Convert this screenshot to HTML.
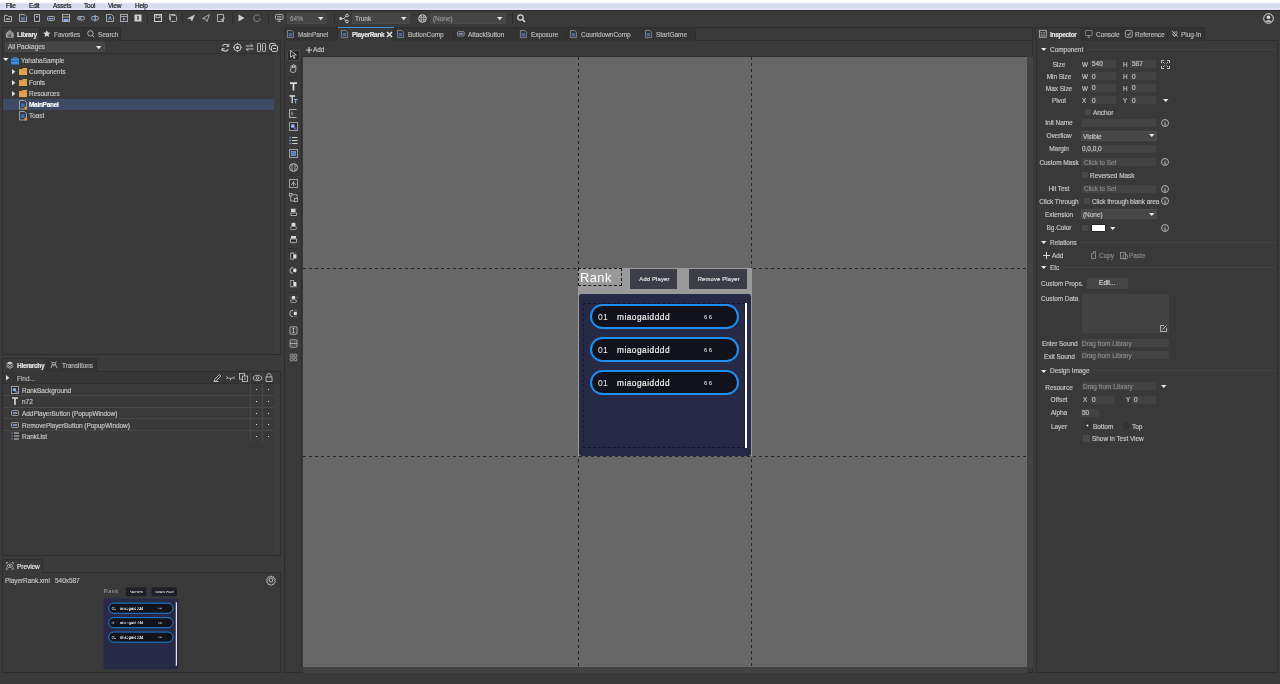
<!DOCTYPE html>
<html><head><meta charset="utf-8">
<style>
*{margin:0;padding:0;box-sizing:border-box}
html,body{-webkit-font-smoothing:antialiased;width:1280px;height:684px;overflow:hidden;background:#3a3a3a;font-family:"Liberation Sans",sans-serif;color:#cfcfcf}
.a{position:absolute}
.t{position:absolute;white-space:nowrap;will-change:transform}
svg{overflow:visible}
</style></head><body>

<div class="a" style="left:0px;top:0px;width:1280px;height:10px;background:linear-gradient(#ffffff 0px,#ffffff 1.5px,#eceef8 3px,#d8dcef 4.5px,#d8dcef 8px,#e3e7f8 9px,#e3e7f8 10px)"></div>
<div class="a" style="left:0px;top:10px;width:1280px;height:1px;background:#2a2728"></div>
<div class="t" style="left:6px;top:1.5px;font-size:6.5px;line-height:9.5px;color:#111;letter-spacing:-0.2px;-webkit-text-stroke:0.15px #111;line-height:8px;">File</div>
<div class="t" style="left:29px;top:1.5px;font-size:6.5px;line-height:9.5px;color:#111;letter-spacing:-0.2px;-webkit-text-stroke:0.15px #111;line-height:8px;">Edit</div>
<div class="t" style="left:52.5px;top:1.5px;font-size:6.5px;line-height:9.5px;color:#111;letter-spacing:-0.2px;-webkit-text-stroke:0.15px #111;line-height:8px;">Assets</div>
<div class="t" style="left:84px;top:1.5px;font-size:6.5px;line-height:9.5px;color:#111;letter-spacing:-0.2px;-webkit-text-stroke:0.15px #111;line-height:8px;">Tool</div>
<div class="t" style="left:108px;top:1.5px;font-size:6.5px;line-height:9.5px;color:#111;letter-spacing:-0.2px;-webkit-text-stroke:0.15px #111;line-height:8px;">View</div>
<div class="t" style="left:134.5px;top:1.5px;font-size:6.5px;line-height:9.5px;color:#111;letter-spacing:-0.2px;-webkit-text-stroke:0.15px #111;line-height:8px;">Help</div>
<svg class="a" style="left:4px;top:14px;" width="9" height="9" viewBox="0 0 9 9"><path d="M0.5 1.5h3l1 1h3v5h-7z" fill="none" stroke="#a9a9a9" stroke-width="1"/><path d="M2 5h4" stroke="#e0e0e0"/></svg>
<svg class="a" style="left:18.5px;top:14px;" width="9" height="9" viewBox="0 0 9 9"><path d="M0.5 0.5h5l2 2v5h-7z" fill="none" stroke="#a9a9a9"/><rect x="2" y="3" width="4" height="3.5" fill="#5a72a8"/></svg>
<svg class="a" style="left:33px;top:14px;" width="9" height="9" viewBox="0 0 9 9"><rect x="1.5" y="0.5" width="5" height="7" fill="none" stroke="#a9a9a9"/><rect x="3" y="2" width="2" height="1.5" fill="#86a8ec"/><path d="M2 5h4" stroke="#222"/></svg>
<svg class="a" style="left:47px;top:14px;" width="9" height="9" viewBox="0 0 9 9"><rect x="0.5" y="2.5" width="7" height="4" rx="1" fill="none" stroke="#a9a9a9"/><rect x="1.5" y="4" width="5" height="1.2" fill="#86a8ec"/></svg>
<svg class="a" style="left:61.5px;top:14px;" width="9" height="9" viewBox="0 0 9 9"><rect x="0.5" y="0.5" width="7" height="7" fill="none" stroke="#a9a9a9"/><rect x="1.5" y="5" width="5" height="2" fill="#86a8ec"/><path d="M1 3h6" stroke="#a9a9a9"/></svg>
<svg class="a" style="left:76.5px;top:14px;" width="9" height="9" viewBox="0 0 9 9"><rect x="0.5" y="2.5" width="7" height="3.5" rx="1.5" fill="none" stroke="#a9a9a9"/><rect x="1.5" y="3.5" width="3" height="1.5" fill="#86a8ec"/></svg>
<svg class="a" style="left:91px;top:14px;" width="9" height="9" viewBox="0 0 9 9"><rect x="0.5" y="2.5" width="7" height="3.5" rx="1.5" fill="none" stroke="#a9a9a9"/><rect x="3.5" y="1" width="1.3" height="6.5" fill="#86a8ec"/></svg>
<svg class="a" style="left:105.5px;top:14px;" width="9" height="9" viewBox="0 0 9 9"><path d="M0.5 0.5h5l2 2v5h-7z" fill="none" stroke="#a9a9a9"/><path d="M2.5 6l1.5-3.5 1.5 3.5" stroke="#86a8ec" fill="none"/></svg>
<svg class="a" style="left:119.5px;top:14px;" width="9" height="9" viewBox="0 0 9 9"><rect x="0.5" y="0.5" width="7" height="7" fill="none" stroke="#a9a9a9"/><path d="M0.5 2.5h7" stroke="#a9a9a9"/><path d="M3 3.5v3l2.5-1.5z" fill="#86a8ec"/></svg>
<svg class="a" style="left:134px;top:14px;" width="9" height="9" viewBox="0 0 9 9"><rect x="0.5" y="0.5" width="7" height="7" fill="#cfcfcf"/><path d="M4 2v4" stroke="#222" stroke-width="1.2"/></svg>
<svg class="a" style="left:153.5px;top:14px;" width="9" height="9" viewBox="0 0 9 9"><rect x="0.5" y="0.5" width="7" height="7" fill="none" stroke="#cfcfcf"/><rect x="2" y="1" width="4" height="2.5" fill="none" stroke="#cfcfcf" stroke-width=".8"/></svg>
<svg class="a" style="left:168.5px;top:14px;" width="9" height="9" viewBox="0 0 9 9"><rect x="1.5" y="1.5" width="6" height="6" rx="1" fill="none" stroke="#a9a9a9"/><path d="M0.5 6V0.5h6" fill="none" stroke="#a9a9a9"/></svg>
<svg class="a" style="left:187px;top:14px;" width="9" height="9" viewBox="0 0 9 9"><path d="M0 4.5L8 0.5 5 7.5 3.5 5z" fill="#c8c8c8"/></svg>
<svg class="a" style="left:202px;top:14px;" width="9" height="9" viewBox="0 0 9 9"><path d="M0.5 4.5L7.5 0.5 5 7.5 3.5 5z" fill="none" stroke="#a9a9a9"/></svg>
<svg class="a" style="left:217px;top:14px;" width="9" height="9" viewBox="0 0 9 9"><rect x="0.5" y="0.5" width="6" height="7" fill="none" stroke="#a9a9a9"/><path d="M3 6l5-3-1.5 4z" fill="#a9a9a9"/></svg>
<svg class="a" style="left:237px;top:14px;" width="9" height="9" viewBox="0 0 9 9"><path d="M1.5 0.5v7l6-3.5z" fill="#d0d0d0"/></svg>
<svg class="a" style="left:253px;top:14px;" width="9" height="9" viewBox="0 0 9 9"><path d="M6.5 2A3.3 3.3 0 1 0 7.3 4.5" fill="none" stroke="#8a8a8a"/></svg>
<svg class="a" style="left:274.5px;top:14px;" width="9" height="9" viewBox="0 0 9 9"><rect x="0.5" y="0.5" width="7.5" height="5" rx="1" fill="none" stroke="#a9a9a9"/><path d="M4.25 5.5v2M2.5 7.5h3.5M2 2.5h4.5M2 4h4.5" stroke="#a9a9a9" stroke-width=".8"/></svg>
<div class="a" style="left:147px;top:13px;width:1px;height:11px;background:#2c2c2c"></div>
<div class="a" style="left:182px;top:13px;width:1px;height:11px;background:#2c2c2c"></div>
<div class="a" style="left:232px;top:13px;width:1px;height:11px;background:#2c2c2c"></div>
<div class="a" style="left:267.5px;top:13px;width:1px;height:11px;background:#2c2c2c"></div>
<div class="a" style="left:334px;top:13px;width:1px;height:11px;background:#2c2c2c"></div>
<div class="a" style="left:512px;top:13px;width:1px;height:11px;background:#2c2c2c"></div>
<div class="a" style="left:287px;top:13px;width:40px;height:11px;background:#454545;border:1px solid #4a4a4a;border-radius:1px"></div>
<div class="t" style="left:290px;top:13.899999999999999px;font-size:6.5px;line-height:9.5px;color:#9a9a9a;letter-spacing:-0.05px;-webkit-text-stroke:0.15px #9a9a9a;">64%</div>
<svg class="a" style="left:318px;top:17.0px;" width="6" height="4" viewBox="0 0 6 4"><path d="M0 0h5.5l-2.75 3.2z" fill="#e6e6e6"/></svg>
<svg class="a" style="left:339px;top:14px;" width="10" height="9" viewBox="0 0 10 9"><circle cx="1.8" cy="4.5" r="1.5" fill="#d0d0d0"/><circle cx="8" cy="1.5" r="1.3" fill="none" stroke="#d0d0d0"/><circle cx="8" cy="7.5" r="1.3" fill="none" stroke="#d0d0d0"/><path d="M3 4.5h2M5 4.5L7 2M5 4.5L7 7" stroke="#d0d0d0" fill="none" stroke-width=".8"/></svg>
<div class="a" style="left:352px;top:13px;width:58px;height:11px;background:#454545;border:1px solid #4a4a4a;border-radius:1px"></div>
<div class="t" style="left:355px;top:13.899999999999999px;font-size:6.5px;line-height:9.5px;color:#bdbdbd;letter-spacing:-0.05px;-webkit-text-stroke:0.15px #bdbdbd;">Trunk</div>
<svg class="a" style="left:401px;top:17.0px;" width="6" height="4" viewBox="0 0 6 4"><path d="M0 0h5.5l-2.75 3.2z" fill="#e6e6e6"/></svg>
<svg class="a" style="left:418px;top:14px;" width="9" height="9" viewBox="0 0 9 9"><circle cx="4.5" cy="4.5" r="3.8" fill="none" stroke="#d0d0d0"/><path d="M0.7 3.2h7.6M0.7 5.8h7.6M3.2 0.7v7.6M5.8 0.7v7.6" stroke="#d0d0d0" stroke-width=".7"/></svg>
<div class="a" style="left:430px;top:13px;width:76px;height:11px;background:#454545;border:1px solid #4a4a4a;border-radius:1px"></div>
<div class="t" style="left:433px;top:13.899999999999999px;font-size:6.5px;line-height:9.5px;color:#9a9a9a;letter-spacing:-0.05px;-webkit-text-stroke:0.15px #9a9a9a;">(None)</div>
<svg class="a" style="left:497px;top:17.0px;" width="6" height="4" viewBox="0 0 6 4"><path d="M0 0h5.5l-2.75 3.2z" fill="#e6e6e6"/></svg>
<svg class="a" style="left:517px;top:14px;" width="9" height="9" viewBox="0 0 9 9"><circle cx="3.5" cy="3.5" r="2.7" fill="none" stroke="#e0e0e0" stroke-width="1.2"/><path d="M5.5 5.5L8 8" stroke="#e0e0e0" stroke-width="1.5"/></svg>
<svg class="a" style="left:1263px;top:13px;" width="11" height="11" viewBox="0 0 11 11"><circle cx="5.5" cy="5.5" r="4.8" fill="none" stroke="#e0e0e0" stroke-width="1"/><circle cx="5.5" cy="4.3" r="1.8" fill="#e0e0e0"/><path d="M2.3 8.8c1-2 5.4-2 6.4 0" fill="#e0e0e0"/></svg>
<div class="a" style="left:2px;top:40px;width:279px;height:315px;background:#393939;border:1px solid #2d2d2d"></div>
<div class="a" style="left:2px;top:27px;width:38px;height:14px;background:#393939;border-right:1px solid #2e2e2e;border-top:1px solid #2e2e2e;border-left:1px solid #2e2e2e;"></div>
<svg class="a" style="left:5.8px;top:30.2px;transform:scale(.85);transform-origin:0 0" width="9" height="9" viewBox="0 0 9 9"><path d="M0.5 4L4.5 0.5 8.5 4v4.5h-8z" fill="#8c8c8c" stroke="#cfcfcf" stroke-width=".8"/><rect x="3" y="5" width="3" height="3.5" fill="#5a5a5a"/></svg>
<div class="t" style="left:17px;top:29.7px;font-size:6.5px;line-height:9.5px;color:#e8e8e8;letter-spacing:-0.3px;font-weight:bold;-webkit-text-stroke:0.15px #e8e8e8;">Library</div>
<div class="a" style="left:40px;top:27px;width:44px;height:14px;background:#333333;border-right:1px solid #2e2e2e;border-top:1px solid #2e2e2e;"></div>
<svg class="a" style="left:42.8px;top:30.2px;transform:scale(.85);transform-origin:0 0" width="9" height="9" viewBox="0 0 9 9"><path d="M4.5 0.2l1.3 2.8 3 .3-2.3 2 .7 3-2.7-1.6-2.7 1.6.7-3-2.3-2 3-.3z" fill="#d8d8d8"/></svg>
<div class="t" style="left:54px;top:29.7px;font-size:6.5px;line-height:9.5px;color:#bdbdbd;letter-spacing:-0.05px;-webkit-text-stroke:0.15px #bdbdbd;">Favorties</div>
<div class="a" style="left:84px;top:27px;width:37px;height:14px;background:#333333;border-right:1px solid #2e2e2e;border-top:1px solid #2e2e2e;"></div>
<svg class="a" style="left:86.8px;top:30.2px;transform:scale(.85);transform-origin:0 0" width="9" height="9" viewBox="0 0 9 9"><circle cx="4" cy="4" r="3.2" fill="none" stroke="#cfcfcf" stroke-width=".9"/><path d="M6.3 6.3L8.5 8.5" stroke="#cfcfcf" stroke-width="1"/></svg>
<div class="t" style="left:98px;top:29.7px;font-size:6.5px;line-height:9.5px;color:#bdbdbd;letter-spacing:-0.05px;-webkit-text-stroke:0.15px #bdbdbd;">Search</div>
<div class="a" style="left:5px;top:42px;width:100px;height:10px;background:#454545;border:1px solid #4a4a4a;border-radius:1px"></div>
<div class="t" style="left:8px;top:42.400000000000006px;font-size:6.5px;line-height:9.5px;color:#c8c8c8;letter-spacing:-0.05px;-webkit-text-stroke:0.15px #c8c8c8;">All Packages</div>
<svg class="a" style="left:96px;top:45.5px;" width="6" height="4" viewBox="0 0 6 4"><path d="M0 0h5.5l-2.75 3.2z" fill="#e6e6e6"/></svg>
<svg class="a" style="left:221px;top:43px;" width="9" height="9" viewBox="0 0 9 9"><path d="M7.5 3A3.5 3.5 0 0 0 1.3 3.3M1 6a3.5 3.5 0 0 0 6.3 .2" fill="none" stroke="#cfcfcf" stroke-width="1.1"/><path d="M7.8 0.8v2.6H5.2M1 8.2V5.6h2.6" fill="none" stroke="#cfcfcf" stroke-width=".9"/></svg>
<svg class="a" style="left:233px;top:43px;" width="9" height="9" viewBox="0 0 9 9"><circle cx="4.5" cy="4.5" r="3.5" fill="none" stroke="#cfcfcf" stroke-width=".9"/><circle cx="4.5" cy="4.5" r="1.5" fill="#cfcfcf"/><path d="M4.5 0v1.5M4.5 7.5V9M0 4.5h1.5M7.5 4.5H9" stroke="#cfcfcf" stroke-width=".8"/></svg>
<svg class="a" style="left:245px;top:43px;" width="9" height="9" viewBox="0 0 9 9"><path d="M0.5 3h7.5M5.5 1l2.5 2M8.5 6H1M3.5 8L1 6" fill="none" stroke="#cfcfcf" stroke-width=".9"/></svg>
<svg class="a" style="left:257px;top:43px;" width="9" height="9" viewBox="0 0 9 9"><rect x="0.5" y="0.5" width="3" height="8" rx=".8" fill="none" stroke="#cfcfcf" stroke-width=".9"/><rect x="5.5" y="0.5" width="3" height="8" rx=".8" fill="none" stroke="#cfcfcf" stroke-width=".9"/></svg>
<svg class="a" style="left:269px;top:43px;" width="9" height="9" viewBox="0 0 9 9"><rect x="0.5" y="0.5" width="6" height="6" rx="1.5" fill="none" stroke="#cfcfcf" stroke-width=".9"/><rect x="2.5" y="2.5" width="6" height="6" rx="1.5" fill="#393939" stroke="#cfcfcf" stroke-width=".9"/><path d="M4 5.5h3" stroke="#cfcfcf"/></svg>
<div class="a" style="left:3px;top:53px;width:271px;height:301px;background:#393939;border-top:1px solid #2f2f2f"></div>
<div class="a" style="left:274px;top:54px;width:6px;height:300px;background:#3d3d3d"></div>
<div class="a" style="left:3px;top:99px;width:271px;height:11px;background:#3c4a66"></div>
<svg class="a" style="left:3.3px;top:58px;" width="6" height="4" viewBox="0 0 6 4"><path d="M0 0h5.5l-2.75 3z" fill="#e8e8e8"/></svg>
<svg class="a" style="left:11px;top:56.5px;" width="8" height="8" viewBox="0 0 8 8"><path d="M2.5 1.5v-1h3v1" fill="none" stroke="#3d8fe0" stroke-width=".9"/><rect x="0" y="1.5" width="8" height="6" fill="#3d8fe0"/><path d="M0 4h8" stroke="#1f4f7f" stroke-width=".7"/></svg>
<div class="t" style="left:21px;top:55.7px;font-size:6.5px;line-height:9.5px;color:#c8c8c8;letter-spacing:-0.05px;-webkit-text-stroke:0.15px #c8c8c8;">YahahaSample</div>
<svg class="a" style="left:12px;top:68.5px;" width="4" height="6" viewBox="0 0 4 6"><path d="M0 0v5.5l3.3-2.75z" fill="#e0e0e0"/></svg>
<svg class="a" style="left:19px;top:67.5px;" width="8" height="7" viewBox="0 0 8 7"><path d="M0 1h3l1 -1h4v7H0z" fill="#e3a24f"/><path d="M0 2h8" stroke="#c98a3b" stroke-width=".6"/></svg>
<div class="t" style="left:28.5px;top:66.7px;font-size:6.5px;line-height:9.5px;color:#c8c8c8;letter-spacing:-0.05px;-webkit-text-stroke:0.15px #c8c8c8;">Components</div>
<svg class="a" style="left:12px;top:79.5px;" width="4" height="6" viewBox="0 0 4 6"><path d="M0 0v5.5l3.3-2.75z" fill="#e0e0e0"/></svg>
<svg class="a" style="left:19px;top:78.5px;" width="8" height="7" viewBox="0 0 8 7"><path d="M0 1h3l1 -1h4v7H0z" fill="#e3a24f"/><path d="M0 2h8" stroke="#c98a3b" stroke-width=".6"/></svg>
<div class="t" style="left:28.5px;top:77.7px;font-size:6.5px;line-height:9.5px;color:#c8c8c8;letter-spacing:-0.05px;-webkit-text-stroke:0.15px #c8c8c8;">Fonts</div>
<svg class="a" style="left:12px;top:90.5px;" width="4" height="6" viewBox="0 0 4 6"><path d="M0 0v5.5l3.3-2.75z" fill="#e0e0e0"/></svg>
<svg class="a" style="left:19px;top:89.5px;" width="8" height="7" viewBox="0 0 8 7"><path d="M0 1h3l1 -1h4v7H0z" fill="#e3a24f"/><path d="M0 2h8" stroke="#c98a3b" stroke-width=".6"/></svg>
<div class="t" style="left:28.5px;top:88.7px;font-size:6.5px;line-height:9.5px;color:#c8c8c8;letter-spacing:-0.05px;-webkit-text-stroke:0.15px #c8c8c8;">Resources</div>
<svg class="a" style="left:19px;top:99.5px;" width="9" height="10" viewBox="0 0 9 10"><path d="M0.5 0.5h5l2 2v6.5h-7z" fill="#34405a" stroke="#a8a8a8" stroke-width=".9"/><rect x="2" y="3.5" width="3.5" height="3.5" fill="#4a68a8"/><circle cx="6.8" cy="8" r="1.5" fill="#f08a2a"/></svg>
<div class="t" style="left:28.5px;top:99.7px;font-size:6.5px;line-height:9.5px;color:#ffffff;letter-spacing:-0.3px;font-weight:bold;-webkit-text-stroke:0.15px #ffffff;">MainPanel</div>
<svg class="a" style="left:19px;top:110.5px;" width="9" height="10" viewBox="0 0 9 10"><path d="M0.5 0.5h5l2 2v6.5h-7z" fill="#34405a" stroke="#a8a8a8" stroke-width=".9"/><rect x="2" y="3.5" width="3.5" height="3.5" fill="#4a68a8"/><circle cx="6.8" cy="8" r="1.5" fill="#f08a2a"/></svg>
<div class="t" style="left:28.5px;top:110.7px;font-size:6.5px;line-height:9.5px;color:#c8c8c8;letter-spacing:-0.05px;-webkit-text-stroke:0.15px #c8c8c8;">Toast</div>
<div class="a" style="left:2px;top:371px;width:279px;height:185px;background:#393939;border:1px solid #2d2d2d"></div>
<div class="a" style="left:2px;top:358px;width:45px;height:14px;background:#393939;border-right:1px solid #2e2e2e;border-top:1px solid #2e2e2e;border-left:1px solid #2e2e2e;"></div>
<svg class="a" style="left:5.8px;top:361.2px;transform:scale(.85);transform-origin:0 0" width="9" height="9" viewBox="0 0 9 9"><path d="M4.5 0.5L8.5 2.5 4.5 4.5 0.5 2.5z" fill="#d0d0d0"/><path d="M0.5 4.5l4 2 4-2M0.5 6.5l4 2 4-2" fill="none" stroke="#d0d0d0" stroke-width=".9"/></svg>
<div class="t" style="left:17px;top:360.7px;font-size:6.5px;line-height:9.5px;color:#e8e8e8;letter-spacing:-0.3px;font-weight:bold;-webkit-text-stroke:0.15px #e8e8e8;">Hierarchy</div>
<div class="a" style="left:47px;top:358px;width:50px;height:14px;background:#333333;border-right:1px solid #2e2e2e;border-top:1px solid #2e2e2e;"></div>
<svg class="a" style="left:49.8px;top:361.2px;transform:scale(.85);transform-origin:0 0" width="9" height="9" viewBox="0 0 9 9"><path d="M1.5 0.5v1M7.5 0.5v1M2.5 2h4v2.5h-4z" fill="none" stroke="#cfcfcf" stroke-width=".9"/><path d="M2.5 4.5L1 8.5M6.5 4.5l2 4M4.5 4.5v2" fill="none" stroke="#cfcfcf" stroke-width=".9"/></svg>
<div class="t" style="left:62px;top:360.7px;font-size:6.5px;line-height:9.5px;color:#bdbdbd;letter-spacing:-0.05px;-webkit-text-stroke:0.15px #bdbdbd;">Transitions</div>
<div class="a" style="left:3px;top:372px;width:271px;height:12px;background:#363636;border-bottom:1px solid #2f2f2f"></div>
<div class="a" style="left:13px;top:372px;width:1px;height:12px;background:#2f2f2f"></div>
<svg class="a" style="left:6px;top:375px;" width="4" height="6" viewBox="0 0 4 6"><path d="M0 0v5.5l3.3-2.75z" fill="#e0e0e0"/></svg>
<div class="t" style="left:16.5px;top:373.7px;font-size:6.5px;line-height:9.5px;color:#b8b8b8;letter-spacing:-0.05px;-webkit-text-stroke:0.15px #b8b8b8;">Find...</div>
<svg class="a" style="left:213px;top:373px;" width="9" height="9" viewBox="0 0 9 9"><path d="M1.5 6.5L6.5 1.5l1.5 1.5-5 5H1.5z" fill="none" stroke="#cfcfcf" stroke-width=".8"/><path d="M0.5 8.5h5" stroke="#cfcfcf" stroke-width=".8"/></svg>
<svg class="a" style="left:226px;top:374px;" width="9" height="8" viewBox="0 0 9 8"><path d="M0.5 2.5c2 2.5 6 2.5 8 0" fill="none" stroke="#cfcfcf" stroke-width=".9"/><path d="M1.5 3.5L0.5 5M4.5 4.8v1.5M7.5 3.5l1 1.5" stroke="#cfcfcf" stroke-width=".8"/></svg>
<svg class="a" style="left:238.5px;top:373px;" width="9" height="9" viewBox="0 0 9 9"><rect x="0.5" y="0.5" width="5" height="5.5" fill="none" stroke="#cfcfcf" stroke-width=".8"/><rect x="3.5" y="3" width="5" height="5.5" fill="#363636" stroke="#cfcfcf" stroke-width=".8"/><path d="M6 4.5v2.5" stroke="#cfcfcf" stroke-width=".8"/></svg>
<div class="a" style="left:250px;top:372px;width:1px;height:70px;background:#474747"></div>
<div class="a" style="left:262px;top:372px;width:1px;height:70px;background:#474747"></div>
<svg class="a" style="left:252.5px;top:374px;" width="9" height="8" viewBox="0 0 9 8"><ellipse cx="4.5" cy="4" rx="4.2" ry="2.6" fill="none" stroke="#cfcfcf" stroke-width=".8"/><circle cx="4.5" cy="4" r="1.3" fill="none" stroke="#cfcfcf" stroke-width=".8"/></svg>
<svg class="a" style="left:265px;top:373px;" width="8" height="9" viewBox="0 0 8 9"><path d="M2 4V2.5a2 2 0 0 1 4 0V4" fill="none" stroke="#cfcfcf" stroke-width=".8"/><rect x="1" y="4" width="6" height="4.5" fill="none" stroke="#cfcfcf" stroke-width=".8"/></svg>
<div class="a" style="left:274px;top:384px;width:6px;height:171px;background:#3d3d3d"></div>
<div class="a" style="left:3px;top:395.2px;width:271px;height:1px;background:#474747"></div>
<svg class="a" style="left:11px;top:385.8px;" width="8" height="8" viewBox="0 0 8 8"><rect x="0.5" y="0.5" width="7" height="7" fill="#2b2b2b" stroke="#a8a8a8" stroke-width=".9"/><circle cx="3.5" cy="3.8" r="1.8" fill="#8fb0ef"/><rect x="4.5" y="5" width="2.5" height="2" fill="#4f6fb0"/></svg>
<div class="t" style="left:21.5px;top:385.7px;font-size:6.5px;line-height:9.5px;color:#c8c8c8;letter-spacing:-0.05px;-webkit-text-stroke:0.15px #c8c8c8;">RankBackground</div>
<div class="a" style="left:256px;top:389.3px;width:1.2px;height:1.2px;background:#dcdcdc"></div>
<div class="a" style="left:268px;top:389.3px;width:1.2px;height:1.2px;background:#dcdcdc"></div>
<div class="a" style="left:3px;top:406.8px;width:271px;height:1px;background:#474747"></div>
<svg class="a" style="left:11px;top:397.40000000000003px;" width="8" height="8" viewBox="0 0 8 8"><path d="M1 1h6M4 1v7" stroke="#d8d8d8" stroke-width="1.6"/></svg>
<div class="t" style="left:21.5px;top:397.3px;font-size:6.5px;line-height:9.5px;color:#c8c8c8;letter-spacing:-0.05px;-webkit-text-stroke:0.15px #c8c8c8;">n72</div>
<div class="a" style="left:256px;top:400.90000000000003px;width:1.2px;height:1.2px;background:#dcdcdc"></div>
<div class="a" style="left:268px;top:400.90000000000003px;width:1.2px;height:1.2px;background:#dcdcdc"></div>
<div class="a" style="left:3px;top:418.4px;width:271px;height:1px;background:#474747"></div>
<svg class="a" style="left:11px;top:410.0px;" width="8" height="6" viewBox="0 0 8 6"><rect x="0.5" y="0.5" width="7" height="5" rx="1" fill="none" stroke="#a8a8a8" stroke-width=".9"/><rect x="1.8" y="2.4" width="4.4" height="1.3" fill="#9ab8f5"/></svg>
<div class="t" style="left:21.5px;top:408.9px;font-size:6.5px;line-height:9.5px;color:#c8c8c8;letter-spacing:-0.05px;-webkit-text-stroke:0.15px #c8c8c8;">AddPlayerButton (PopupWindow)</div>
<div class="a" style="left:256px;top:412.5px;width:1.2px;height:1.2px;background:#dcdcdc"></div>
<div class="a" style="left:268px;top:412.5px;width:1.2px;height:1.2px;background:#dcdcdc"></div>
<div class="a" style="left:3px;top:430.0px;width:271px;height:1px;background:#474747"></div>
<svg class="a" style="left:11px;top:421.6px;" width="8" height="6" viewBox="0 0 8 6"><rect x="0.5" y="0.5" width="7" height="5" rx="1" fill="none" stroke="#a8a8a8" stroke-width=".9"/><rect x="1.8" y="2.4" width="4.4" height="1.3" fill="#9ab8f5"/></svg>
<div class="t" style="left:21.5px;top:420.5px;font-size:6.5px;line-height:9.5px;color:#c8c8c8;letter-spacing:-0.05px;-webkit-text-stroke:0.15px #c8c8c8;">RemovePlayerButton (PopupWindow)</div>
<div class="a" style="left:256px;top:424.1px;width:1.2px;height:1.2px;background:#dcdcdc"></div>
<div class="a" style="left:268px;top:424.1px;width:1.2px;height:1.2px;background:#dcdcdc"></div>
<svg class="a" style="left:11px;top:432.2px;" width="8" height="8" viewBox="0 0 8 8"><path d="M0.5 1h1M0.5 4h1M0.5 7h1" stroke="#8fb0ef" stroke-width="1.2"/><path d="M3 1h5M3 4h5M3 7h5" stroke="#d0d0d0" stroke-width="1"/></svg>
<div class="t" style="left:21.5px;top:432.09999999999997px;font-size:6.5px;line-height:9.5px;color:#c8c8c8;letter-spacing:-0.05px;-webkit-text-stroke:0.15px #c8c8c8;">RankList</div>
<div class="a" style="left:256px;top:435.7px;width:1.2px;height:1.2px;background:#dcdcdc"></div>
<div class="a" style="left:268px;top:435.7px;width:1.2px;height:1.2px;background:#dcdcdc"></div>
<div class="a" style="left:2px;top:572px;width:279px;height:101px;background:#393939;border:1px solid #2d2d2d"></div>
<div class="a" style="left:2px;top:559px;width:41px;height:14px;background:#393939;border-right:1px solid #2e2e2e;border-top:1px solid #2e2e2e;border-left:1px solid #2e2e2e;"></div>
<svg class="a" style="left:5.8px;top:562.2px;transform:scale(.85);transform-origin:0 0" width="9" height="9" viewBox="0 0 9 9"><path d="M0.5 2.5v-2h2M6.5 0.5h2v2M8.5 6.5v2h-2M2.5 8.5h-2v-2" fill="none" stroke="#cfcfcf" stroke-width=".8"/><ellipse cx="4.5" cy="4.5" rx="3.2" ry="2" fill="none" stroke="#cfcfcf" stroke-width=".8"/><circle cx="4.5" cy="4.5" r="1" fill="#cfcfcf"/></svg>
<div class="t" style="left:17px;top:561.7px;font-size:6.5px;line-height:9.5px;color:#e8e8e8;letter-spacing:-0.05px;-webkit-text-stroke:0.15px #e8e8e8;">Preview</div>
<div class="t" style="left:5px;top:576.2px;font-size:6.5px;line-height:9.5px;color:#c8c8c8;letter-spacing:-0.05px;-webkit-text-stroke:0.15px #c8c8c8;">PlayerRank.xml</div>
<div class="t" style="left:54.5px;top:576.2px;font-size:6.5px;line-height:9.5px;color:#c8c8c8;letter-spacing:-0.05px;-webkit-text-stroke:0.15px #c8c8c8;">540x587</div>
<svg class="a" style="left:266px;top:575px;" width="10" height="10" viewBox="0 0 10 10"><circle cx="5" cy="5" r="2" fill="none" stroke="#cfcfcf" stroke-width=".9"/><path d="M5 0.8l1 1.3 1.6-.3.4 1.6 1.4.8-.7 1.5.7 1.5-1.4.8-.4 1.6-1.6-.3-1 1.3-1-1.3-1.6.3-.4-1.6-1.4-.8.7-1.5-.7-1.5 1.4-.8.4-1.6 1.6.3z" fill="none" stroke="#cfcfcf" stroke-width=".8"/></svg>
<div class="a" style="left:284px;top:27px;width:749px;height:646px;background:#393939;border:1px solid #2d2d2d"></div>
<div class="a" style="left:285px;top:40px;width:747px;height:1px;background:#2d2d2d"></div>
<div class="a" style="left:284px;top:27px;width:54px;height:14px;background:#333333;border-right:1px solid #2e2e2e;border-top:1px solid #2e2e2e;"></div>
<svg class="a" style="left:286.8px;top:30.2px;transform:scale(.85);transform-origin:0 0" width="9" height="9" viewBox="0 0 9 9"><path d="M0.5 0.5h5l2 2v6.5h-7z" fill="#2e3440" stroke="#9a9a9a" stroke-width=".9"/><rect x="2" y="3.5" width="4" height="4" fill="#4f66a0"/></svg>
<div class="t" style="left:297.5px;top:29.7px;font-size:6.5px;line-height:9.5px;color:#bdbdbd;letter-spacing:-0.05px;-webkit-text-stroke:0.15px #bdbdbd;">MainPanel</div>
<div class="a" style="left:338px;top:27px;width:56px;height:14px;background:#393939;border-right:1px solid #2e2e2e;border-top:1px solid #2e2e2e;"></div>
<svg class="a" style="left:340.8px;top:30.2px;transform:scale(.85);transform-origin:0 0" width="9" height="9" viewBox="0 0 9 9"><path d="M0.5 0.5h5l2 2v6.5h-7z" fill="#2e3440" stroke="#9a9a9a" stroke-width=".9"/><rect x="2" y="3.5" width="4" height="4" fill="#4f66a0"/></svg>
<div class="t" style="left:351.5px;top:29.7px;font-size:6.5px;line-height:9.5px;color:#e8e8e8;letter-spacing:-0.3px;font-weight:bold;-webkit-text-stroke:0.15px #e8e8e8;">PlayerRank</div>
<div class="a" style="left:394px;top:27px;width:60px;height:14px;background:#333333;border-right:1px solid #2e2e2e;border-top:1px solid #2e2e2e;"></div>
<svg class="a" style="left:396.8px;top:30.2px;transform:scale(.85);transform-origin:0 0" width="9" height="9" viewBox="0 0 9 9"><path d="M0.5 0.5h5l2 2v6.5h-7z" fill="#2e3440" stroke="#9a9a9a" stroke-width=".9"/><rect x="2" y="3.5" width="4" height="4" fill="#4f66a0"/></svg>
<div class="t" style="left:407.5px;top:29.7px;font-size:6.5px;line-height:9.5px;color:#bdbdbd;letter-spacing:-0.05px;-webkit-text-stroke:0.15px #bdbdbd;">ButtonComp</div>
<div class="a" style="left:454px;top:27px;width:63px;height:14px;background:#333333;border-right:1px solid #2e2e2e;border-top:1px solid #2e2e2e;"></div>
<svg class="a" style="left:456.8px;top:30.2px;transform:scale(.85);transform-origin:0 0" width="9" height="9" viewBox="0 0 9 9"><rect x="0.5" y="2" width="8" height="5" rx="1" fill="none" stroke="#a8a8a8" stroke-width=".9"/><rect x="1.8" y="3.9" width="5.4" height="1.3" fill="#9ab8f5"/></svg>
<div class="t" style="left:467.5px;top:29.7px;font-size:6.5px;line-height:9.5px;color:#bdbdbd;letter-spacing:-0.05px;-webkit-text-stroke:0.15px #bdbdbd;">AttackButton</div>
<div class="a" style="left:517px;top:27px;width:50px;height:14px;background:#333333;border-right:1px solid #2e2e2e;border-top:1px solid #2e2e2e;"></div>
<svg class="a" style="left:519.8px;top:30.2px;transform:scale(.85);transform-origin:0 0" width="9" height="9" viewBox="0 0 9 9"><path d="M0.5 0.5h5l2 2v6.5h-7z" fill="#2e3440" stroke="#9a9a9a" stroke-width=".9"/><rect x="2" y="3.5" width="4" height="4" fill="#4f66a0"/></svg>
<div class="t" style="left:530.5px;top:29.7px;font-size:6.5px;line-height:9.5px;color:#bdbdbd;letter-spacing:-0.05px;-webkit-text-stroke:0.15px #bdbdbd;">Exposure</div>
<div class="a" style="left:567px;top:27px;width:75px;height:14px;background:#333333;border-right:1px solid #2e2e2e;border-top:1px solid #2e2e2e;"></div>
<svg class="a" style="left:569.8px;top:30.2px;transform:scale(.85);transform-origin:0 0" width="9" height="9" viewBox="0 0 9 9"><path d="M0.5 0.5h5l2 2v6.5h-7z" fill="#2e3440" stroke="#9a9a9a" stroke-width=".9"/><rect x="2" y="3.5" width="4" height="4" fill="#4f66a0"/></svg>
<div class="t" style="left:580.5px;top:29.7px;font-size:6.5px;line-height:9.5px;color:#bdbdbd;letter-spacing:-0.05px;-webkit-text-stroke:0.15px #bdbdbd;">CountdownComp</div>
<div class="a" style="left:642px;top:27px;width:54px;height:14px;background:#333333;border-right:1px solid #2e2e2e;border-top:1px solid #2e2e2e;"></div>
<svg class="a" style="left:644.8px;top:30.2px;transform:scale(.85);transform-origin:0 0" width="9" height="9" viewBox="0 0 9 9"><path d="M0.5 0.5h5l2 2v6.5h-7z" fill="#2e3440" stroke="#9a9a9a" stroke-width=".9"/><rect x="2" y="3.5" width="4" height="4" fill="#4f66a0"/></svg>
<div class="t" style="left:655.5px;top:29.7px;font-size:6.5px;line-height:9.5px;color:#bdbdbd;letter-spacing:-0.05px;-webkit-text-stroke:0.15px #bdbdbd;">StartGame</div>
<div class="a" style="left:338px;top:27px;width:56px;height:1.3px;background:#3d8fd6"></div>
<svg class="a" style="left:386px;top:31px;" width="7" height="7" viewBox="0 0 7 7"><path d="M1 1l5 5M6 1L1 6" stroke="#f0f0f0" stroke-width="1.3"/></svg>
<div class="a" style="left:285px;top:41px;width:747px;height:15px;background:#393939"></div>
<div class="a" style="left:303px;top:56px;width:724px;height:1px;background:#2b2b2b"></div>
<svg class="a" style="left:305.5px;top:47.3px;" width="6" height="6" viewBox="0 0 6 6"><path d="M3 0v6M0 3h6" stroke="#d8d8d8" stroke-width="1"/></svg>
<div class="t" style="left:313px;top:45.1px;font-size:6.5px;line-height:9.5px;color:#c8c8c8;letter-spacing:-0.05px;-webkit-text-stroke:0.15px #c8c8c8;">Add</div>
<div class="a" style="left:285px;top:57px;width:17px;height:609px;background:#393939;border-right:1px solid #2d2d2d"></div>
<div class="a" style="left:286.5px;top:50px;width:13px;height:11px;background:#2a2a2a;border:1px solid #4a4a4a;border-radius:1px"></div>
<svg class="a" style="left:289px;top:50.4px;" width="9" height="9" viewBox="0 0 9 9"><path d="M1.5 0.5v7l2-2 1.5 3 1-.5-1.5-3h2.8z" fill="none" stroke="#cfcfcf" stroke-width=".8"/></svg>
<svg class="a" style="left:289px;top:64.4px;" width="9" height="9" viewBox="0 0 9 9"><path d="M2 4.5V2.5a.8.8 0 0 1 1.6 0V4V1.5a.8.8 0 0 1 1.6 0V4V2a.8.8 0 0 1 1.6 0v4a2.5 2.5 0 0 1-2.5 2.5h-.5A2.5 2.5 0 0 1 1.3 6z" fill="none" stroke="#cfcfcf" stroke-width=".8"/></svg>
<div class="a" style="left:287px;top:77px;width:12px;height:1px;background:#2f2f2f"></div>
<svg class="a" style="left:289px;top:81.9px;" width="9" height="9" viewBox="0 0 9 9"><path d="M1 1.2h7M4.5 1.2V8.5" stroke="#e0e0e0" stroke-width="1.7"/></svg>
<svg class="a" style="left:289px;top:95.4px;" width="9" height="9" viewBox="0 0 9 9"><path d="M0.5 1h5.5M3.2 1v7" stroke="#e0e0e0" stroke-width="1.3"/><path d="M5 4.5h3.5M6.7 4.5v4" stroke="#8fb0ef" stroke-width="1"/></svg>
<svg class="a" style="left:289px;top:108.9px;" width="9" height="9" viewBox="0 0 9 9"><path d="M7.5 0.5H0.5v8h7" fill="none" stroke="#cfcfcf" stroke-width=".8"/><path d="M3 2.5v4" stroke="#cfcfcf" stroke-width=".8"/></svg>
<svg class="a" style="left:289px;top:122.4px;" width="9" height="9" viewBox="0 0 9 9"><rect x="0.5" y="0.5" width="8" height="8" fill="#2b2b2b" stroke="#a8a8a8" stroke-width=".9"/><circle cx="3.8" cy="4" r="2" fill="#8fb0ef"/><rect x="5" y="5.5" width="2.5" height="2" fill="#4f6fb0"/></svg>
<svg class="a" style="left:289px;top:135.9px;" width="9" height="9" viewBox="0 0 9 9"><path d="M0.5 1.5h1.2M0.5 4.5h1.2M0.5 7.5h1.2" stroke="#8fb0ef" stroke-width="1.3"/><path d="M3 1.5h5.5M3 4.5h5.5M3 7.5h5.5" stroke="#cfcfcf" stroke-width="1"/></svg>
<svg class="a" style="left:289px;top:149.4px;" width="9" height="9" viewBox="0 0 9 9"><rect x="0.5" y="0.5" width="8" height="8" fill="none" stroke="#a8a8a8" stroke-width=".9"/><rect x="2.3" y="2.3" width="4.4" height="4.4" fill="#5a7ac0" stroke="#8fb0ef" stroke-width=".5"/></svg>
<svg class="a" style="left:289px;top:162.9px;" width="9" height="9" viewBox="0 0 9 9"><ellipse cx="4.5" cy="4.5" rx="4" ry="3.8" fill="none" stroke="#cfcfcf" stroke-width=".9"/><path d="M3 1v7M6 1v7" stroke="#cfcfcf" stroke-width=".7"/></svg>
<div class="a" style="left:287px;top:175px;width:12px;height:1px;background:#2f2f2f"></div>
<svg class="a" style="left:289px;top:178.9px;" width="9" height="9" viewBox="0 0 9 9"><rect x="0.5" y="0.5" width="8" height="8" fill="none" stroke="#a8a8a8" stroke-width=".9"/><path d="M2 6l2.5-2.5L7 6M4.5 2v5" stroke="#cfcfcf" stroke-width=".7" fill="none"/></svg>
<svg class="a" style="left:289px;top:192.9px;" width="9" height="9" viewBox="0 0 9 9"><rect x="0.5" y="0.5" width="2.5" height="2.5" fill="none" stroke="#cfcfcf" stroke-width=".7"/><rect x="5.5" y="5.5" width="3" height="3" fill="none" stroke="#cfcfcf" stroke-width=".7"/><path d="M1.7 3v5h3.8M3 1.7h5v3.8" stroke="#cfcfcf" stroke-width=".7" fill="none"/></svg>
<svg class="a" style="left:289px;top:208.4px;" width="9" height="9" viewBox="0 0 9 9"><rect x="2" y="1" width="4.5" height="3" fill="#d8d8d8"/><rect x="2" y="5" width="5.5" height="2.5" fill="#222" stroke="#c8c8c8" stroke-width=".8"/><path d="M1.5 0.7h6" stroke="#888" stroke-width=".6"/></svg>
<svg class="a" style="left:289px;top:221.9px;" width="9" height="9" viewBox="0 0 9 9"><rect x="2.5" y="0.8" width="4" height="3.4" rx="1.2" fill="#d8d8d8"/><rect x="1.8" y="4.6" width="5.4" height="2.8" rx=".6" fill="#222" stroke="#c8c8c8" stroke-width=".8"/></svg>
<svg class="a" style="left:289px;top:235.4px;" width="9" height="9" viewBox="0 0 9 9"><rect x="2" y="1" width="5" height="2.6" fill="#d8d8d8"/><rect x="1.5" y="4" width="6" height="3.2" fill="#222" stroke="#c8c8c8" stroke-width=".8"/><path d="M1.5 8h6" stroke="#888" stroke-width=".6"/></svg>
<div class="a" style="left:287px;top:248px;width:12px;height:1px;background:#2f2f2f"></div>
<svg class="a" style="left:289px;top:252.4px;" width="9" height="9" viewBox="0 0 9 9"><rect x="1.8" y="1.2" width="2.6" height="6" fill="#222" stroke="#c8c8c8" stroke-width=".8"/><rect x="4.8" y="2.4" width="2.6" height="4" fill="#e0e0e0"/><path d="M1.5 0.8h6" stroke="#888" stroke-width=".6"/></svg>
<svg class="a" style="left:289px;top:265.9px;" width="9" height="9" viewBox="0 0 9 9"><path d="M4 1.5A3 3 0 0 0 4 7.5" fill="none" stroke="#c8c8c8" stroke-width=".9"/><rect x="4.2" y="2.6" width="3.2" height="3.6" rx="1" fill="#e0e0e0"/></svg>
<svg class="a" style="left:289px;top:279.4px;" width="9" height="9" viewBox="0 0 9 9"><rect x="1.8" y="1.5" width="2.6" height="6" fill="#222" stroke="#c8c8c8" stroke-width=".8"/><rect x="4.8" y="3" width="2.6" height="4.5" fill="#e0e0e0"/><path d="M1 8h7" stroke="#888" stroke-width=".6"/></svg>
<div class="a" style="left:287px;top:292px;width:12px;height:1px;background:#2f2f2f"></div>
<svg class="a" style="left:289px;top:295.4px;" width="9" height="9" viewBox="0 0 9 9"><path d="M1 1.5v2M8 1.5v2" stroke="#888" stroke-width=".6"/><rect x="2.8" y="1" width="3.4" height="3" rx="1" fill="#e0e0e0"/><rect x="1.6" y="4.8" width="5.8" height="2.6" rx="1.2" fill="#222" stroke="#c8c8c8" stroke-width=".8"/></svg>
<svg class="a" style="left:289px;top:308.9px;" width="9" height="9" viewBox="0 0 9 9"><path d="M4 1.2A3 3 0 0 0 4 7.7" fill="none" stroke="#c8c8c8" stroke-width=".9"/><rect x="4.8" y="2.8" width="3" height="3.3" fill="#e0e0e0"/><path d="M5 1.2h3M5 7.7h3" stroke="#888" stroke-width=".6"/></svg>
<div class="a" style="left:287px;top:321px;width:12px;height:1px;background:#2f2f2f"></div>
<svg class="a" style="left:289px;top:325.9px;" width="9" height="9" viewBox="0 0 9 9"><rect x="1" y="0.8" width="7" height="7.4" rx="1" fill="none" stroke="#c8c8c8" stroke-width=".8"/><path d="M4.5 2v5M3.3 3.2L4.5 2l1.2 1.2M3.3 5.8L4.5 7l1.2-1.2" fill="none" stroke="#d8d8d8" stroke-width=".7"/></svg>
<svg class="a" style="left:289px;top:339.4px;" width="9" height="9" viewBox="0 0 9 9"><rect x="1" y="0.8" width="7" height="7.4" rx="1" fill="none" stroke="#c8c8c8" stroke-width=".8"/><path d="M1 4.5h7M2.5 3h1.2M5.3 3h1.2M2.5 6h1.2M5.3 6h1.2" fill="none" stroke="#d8d8d8" stroke-width=".7"/></svg>
<svg class="a" style="left:289px;top:352.9px;" width="9" height="9" viewBox="0 0 9 9"><rect x="1.2" y="1.2" width="2.8" height="2.8" rx=".7" fill="none" stroke="#c8c8c8" stroke-width=".7"/><rect x="5" y="1.2" width="2.8" height="2.8" rx=".7" fill="none" stroke="#c8c8c8" stroke-width=".7"/><rect x="1.2" y="5" width="2.8" height="2.8" rx=".7" fill="none" stroke="#c8c8c8" stroke-width=".7"/><rect x="5" y="5" width="2.8" height="2.8" rx=".7" fill="none" stroke="#c8c8c8" stroke-width=".7"/></svg>
<div class="a" style="left:303px;top:57px;width:724px;height:610px;background:#676767"></div>
<div class="a" style="left:1027px;top:57px;width:6px;height:610px;background:#424242"></div>
<div class="a" style="left:303px;top:667px;width:724px;height:6px;background:#424242"></div>
<div class="a" style="left:303px;top:268px;width:724px;height:1px;background:repeating-linear-gradient(90deg,#262626 0 3.5px,transparent 3.5px 6px)"></div>
<div class="a" style="left:303px;top:455.5px;width:724px;height:1px;background:repeating-linear-gradient(90deg,#262626 0 3.5px,transparent 3.5px 6px)"></div>
<div class="a" style="left:578px;top:57px;width:1px;height:610px;background:repeating-linear-gradient(180deg,#262626 0 3.5px,transparent 3.5px 6px)"></div>
<div class="a" style="left:751px;top:57px;width:1px;height:610px;background:repeating-linear-gradient(180deg,#262626 0 3.5px,transparent 3.5px 6px)"></div>
<div class="a" style="left:578px;top:268px;width:174px;height:187.5px;background:#9a9a9a"></div>
<div class="a" style="left:578px;top:268px;width:173px;height:187px;transform-origin:0 0;transform:scale(1.0)">
<div class="t" style="left:1.5px;top:1px;font-size:12.8px;line-height:17px;color:#ffffff;letter-spacing:0.5px">Rank</div>
<div class="a" style="left:0;top:0;width:44px;height:18px;border:1px dashed #1a1a1a"></div>
<div class="a" style="left:52px;top:1px;width:47px;height:19.6px;background:#3b3e47"></div>
<div class="a" style="left:111px;top:1px;width:57.6px;height:19.6px;background:#3b3e47"></div>
<div class="t" style="left:52.5px;top:7px;width:47px;text-align:center;font-size:5.8px;line-height:8px;color:#e8e8e8;letter-spacing:0.2px;-webkit-text-stroke:0.15px #e8e8e8">Add Player</div>
<div class="t" style="left:111.5px;top:7px;width:57.6px;text-align:center;font-size:5.8px;line-height:8px;color:#e8e8e8;letter-spacing:0.2px;-webkit-text-stroke:0.15px #e8e8e8">Remove Player</div>
<div class="a" style="left:0.7px;top:26px;width:172.3px;height:161.5px;background:#262a47;border-radius:2.5px"></div>
<div class="a" style="left:4.5px;top:34.5px;width:162px;height:145px;border:1px dashed #16172a;border-right:none"></div>
<div class="a" style="left:12px;top:36px;width:149px;height:25.2px;background:#11121c;border:2px solid #1e8ff0;border-radius:13px"></div>
<div class="t" style="left:19.5px;top:44px;font-size:8.5px;line-height:11px;color:#f0f0f0;letter-spacing:0.3px">01</div>
<div class="t" style="left:38.8px;top:44px;font-size:8.3px;line-height:11px;color:#f0f0f0;letter-spacing:0.5px;-webkit-text-stroke:0.2px #f0f0f0">miaogaidddd</div>
<div class="t" style="left:125.5px;top:44px;font-size:6px;line-height:10px;color:#f0f0f0;letter-spacing:1.4px">66</div>
<div class="a" style="left:12px;top:69px;width:149px;height:25.2px;background:#11121c;border:2px solid #1e8ff0;border-radius:13px"></div>
<div class="t" style="left:19.5px;top:77px;font-size:8.5px;line-height:11px;color:#f0f0f0;letter-spacing:0.3px">01</div>
<div class="t" style="left:38.8px;top:77px;font-size:8.3px;line-height:11px;color:#f0f0f0;letter-spacing:0.5px;-webkit-text-stroke:0.2px #f0f0f0">miaogaidddd</div>
<div class="t" style="left:125.5px;top:77px;font-size:6px;line-height:10px;color:#f0f0f0;letter-spacing:1.4px">66</div>
<div class="a" style="left:12px;top:102px;width:149px;height:25.2px;background:#11121c;border:2px solid #1e8ff0;border-radius:13px"></div>
<div class="t" style="left:19.5px;top:110px;font-size:8.5px;line-height:11px;color:#f0f0f0;letter-spacing:0.3px">01</div>
<div class="t" style="left:38.8px;top:110px;font-size:8.3px;line-height:11px;color:#f0f0f0;letter-spacing:0.5px;-webkit-text-stroke:0.2px #f0f0f0">miaogaidddd</div>
<div class="t" style="left:125.5px;top:110px;font-size:6px;line-height:10px;color:#f0f0f0;letter-spacing:1.4px">66</div>
<div class="a" style="left:166px;top:35px;width:3.2px;height:144.7px;background:#ffffff;border-left:0.5px solid #222"></div>
</div>
<div class="a" style="left:103.2px;top:587.3px;width:173px;height:187px;transform-origin:0 0;transform:scale(0.4376)">
<div class="t" style="left:1.5px;top:1px;font-size:12.8px;line-height:17px;color:#8a8a8a;letter-spacing:0.5px;font-weight:bold">Rank</div>
<div class="a" style="left:52px;top:1px;width:47px;height:19.6px;background:#1e1f27"></div>
<div class="a" style="left:111px;top:1px;width:57.6px;height:19.6px;background:#1e1f27"></div>
<div class="t" style="left:52.5px;top:7px;width:47px;text-align:center;font-size:5.8px;line-height:8px;color:#e8e8e8;letter-spacing:0.2px;-webkit-text-stroke:0.15px #e8e8e8">Add Player</div>
<div class="t" style="left:111.5px;top:7px;width:57.6px;text-align:center;font-size:5.8px;line-height:8px;color:#e8e8e8;letter-spacing:0.2px;-webkit-text-stroke:0.15px #e8e8e8">Remove Player</div>
<div class="a" style="left:0.7px;top:26px;width:172.3px;height:161.5px;background:#262a47;border-radius:2.5px"></div>
<div class="a" style="left:12px;top:36px;width:149px;height:25.2px;background:#11121c;border:2px solid #1e8ff0;border-radius:13px"></div>
<div class="t" style="left:19.5px;top:44px;font-size:8.5px;line-height:11px;color:#f0f0f0;letter-spacing:0.3px">01</div>
<div class="t" style="left:38.8px;top:44px;font-size:8.3px;line-height:11px;color:#f0f0f0;letter-spacing:0.5px;-webkit-text-stroke:0.2px #f0f0f0">miaogaidddd</div>
<div class="t" style="left:125.5px;top:44px;font-size:6px;line-height:10px;color:#f0f0f0;letter-spacing:1.4px">66</div>
<div class="a" style="left:12px;top:69px;width:149px;height:25.2px;background:#11121c;border:2px solid #1e8ff0;border-radius:13px"></div>
<div class="t" style="left:19.5px;top:77px;font-size:8.5px;line-height:11px;color:#f0f0f0;letter-spacing:0.3px">01</div>
<div class="t" style="left:38.8px;top:77px;font-size:8.3px;line-height:11px;color:#f0f0f0;letter-spacing:0.5px;-webkit-text-stroke:0.2px #f0f0f0">miaogaidddd</div>
<div class="t" style="left:125.5px;top:77px;font-size:6px;line-height:10px;color:#f0f0f0;letter-spacing:1.4px">66</div>
<div class="a" style="left:12px;top:102px;width:149px;height:25.2px;background:#11121c;border:2px solid #1e8ff0;border-radius:13px"></div>
<div class="t" style="left:19.5px;top:110px;font-size:8.5px;line-height:11px;color:#f0f0f0;letter-spacing:0.3px">01</div>
<div class="t" style="left:38.8px;top:110px;font-size:8.3px;line-height:11px;color:#f0f0f0;letter-spacing:0.5px;-webkit-text-stroke:0.2px #f0f0f0">miaogaidddd</div>
<div class="t" style="left:125.5px;top:110px;font-size:6px;line-height:10px;color:#f0f0f0;letter-spacing:1.4px">66</div>
<div class="a" style="left:166px;top:35px;width:3.2px;height:144.7px;background:#ffffff;border-left:0.5px solid #222"></div>
</div>
<div class="a" style="left:1036px;top:40px;width:242px;height:633px;background:#393939;border:1px solid #2d2d2d"></div>
<div class="a" style="left:1035px;top:27px;width:47px;height:14px;background:#393939;border-right:1px solid #2e2e2e;border-top:1px solid #2e2e2e;border-left:1px solid #2e2e2e;"></div>
<svg class="a" style="left:1038.8px;top:30.2px;transform:scale(.85);transform-origin:0 0" width="9" height="9" viewBox="0 0 9 9"><rect x="0.5" y="0.5" width="8" height="8" fill="none" stroke="#cfcfcf" stroke-width=".8"/><path d="M2 3h2M2 5h2M5 3h2M5 5h2M2 7h5" stroke="#cfcfcf" stroke-width=".7"/></svg>
<div class="t" style="left:1050px;top:29.7px;font-size:6.5px;line-height:9.5px;color:#e8e8e8;letter-spacing:-0.3px;font-weight:bold;-webkit-text-stroke:0.15px #e8e8e8;">Inspector</div>
<div class="a" style="left:1082px;top:27px;width:40px;height:14px;background:#333333;border-right:1px solid #2e2e2e;border-top:1px solid #2e2e2e;"></div>
<svg class="a" style="left:1084.8px;top:30.2px;transform:scale(.85);transform-origin:0 0" width="9" height="9" viewBox="0 0 9 9"><rect x="0.5" y="0.5" width="8" height="6" rx="1" fill="none" stroke="#a8a8a8" stroke-width=".8"/><path d="M3 8.5h3M4.5 6.5v2" stroke="#a8a8a8" stroke-width=".8"/></svg>
<div class="t" style="left:1096px;top:29.7px;font-size:6.5px;line-height:9.5px;color:#bdbdbd;letter-spacing:-0.05px;-webkit-text-stroke:0.15px #bdbdbd;">Console</div>
<div class="a" style="left:1122px;top:27px;width:46px;height:14px;background:#333333;border-right:1px solid #2e2e2e;border-top:1px solid #2e2e2e;"></div>
<svg class="a" style="left:1124.8px;top:30.2px;transform:scale(.85);transform-origin:0 0" width="9" height="9" viewBox="0 0 9 9"><rect x="0.5" y="0.5" width="8" height="8" rx="1.5" fill="none" stroke="#cfcfcf" stroke-width=".8"/><path d="M6 2.5v3H3M4 4.5L3 5.5 4 6.5" fill="none" stroke="#cfcfcf" stroke-width=".8"/></svg>
<div class="t" style="left:1135px;top:29.7px;font-size:6.5px;line-height:9.5px;color:#bdbdbd;letter-spacing:-0.05px;-webkit-text-stroke:0.15px #bdbdbd;">Reference</div>
<div class="a" style="left:1168px;top:27px;width:37px;height:14px;background:#333333;border-right:1px solid #2e2e2e;border-top:1px solid #2e2e2e;"></div>
<svg class="a" style="left:1170.8px;top:30.2px;transform:scale(.85);transform-origin:0 0" width="9" height="9" viewBox="0 0 9 9"><path d="M1 1l7 7M6 1.5l1.5 1.5M2 5.5l2.5 2.5" stroke="#cfcfcf" stroke-width=".9"/><rect x="2.5" y="2.5" width="4" height="4" rx="1" transform="rotate(45 4.5 4.5)" fill="none" stroke="#cfcfcf" stroke-width=".8"/></svg>
<div class="t" style="left:1181px;top:29.7px;font-size:6.5px;line-height:9.5px;color:#bdbdbd;letter-spacing:-0.05px;-webkit-text-stroke:0.15px #bdbdbd;">Plug-In</div>
<svg class="a" style="left:1040.5px;top:48.0px;" width="6" height="4" viewBox="0 0 6 4"><path d="M0 0h5.5l-2.75 3z" fill="#e8e8e8"/></svg>
<div class="t" style="left:1049.5px;top:44.800000000000004px;font-size:6.5px;line-height:9.5px;color:#c8c8c8;letter-spacing:-0.05px;-webkit-text-stroke:0.15px #c8c8c8;">Component</div>
<div class="a" style="left:1087px;top:48.7px;width:188px;height:1px;background:#444"></div>
<div class="t" style="left:1019px;top:59.7px;width:80px;text-align:center;font-size:6.5px;line-height:9.5px;color:#c8c8c8;letter-spacing:-0.05px;-webkit-text-stroke:0.15px #c8c8c8">Size</div>
<div class="t" style="left:1082px;top:59.7px;font-size:6.3px;line-height:9.3px;color:#c8c8c8;letter-spacing:-0.2px;-webkit-text-stroke:0.15px #c8c8c8;">W</div>
<div class="a" style="left:1090px;top:59.5px;width:26px;height:8.5px;background:#434343"></div>
<div class="t" style="left:1092px;top:59.45px;font-size:6.5px;line-height:9.5px;color:#c8c8c8;letter-spacing:-0.05px;-webkit-text-stroke:0.15px #c8c8c8;">540</div>
<div class="t" style="left:1123px;top:59.7px;font-size:6.3px;line-height:9.3px;color:#c8c8c8;letter-spacing:-0.05px;-webkit-text-stroke:0.15px #c8c8c8;">H</div>
<div class="a" style="left:1130px;top:59.5px;width:25.5px;height:8.5px;background:#434343"></div>
<div class="t" style="left:1132px;top:59.45px;font-size:6.5px;line-height:9.5px;color:#c8c8c8;letter-spacing:-0.05px;-webkit-text-stroke:0.15px #c8c8c8;">587</div>
<svg class="a" style="left:1160.5px;top:59.5px;" width="9" height="9" viewBox="0 0 9 9"><path d="M0.5 3V0.5H3M6 0.5h2.5V3M8.5 6v2.5H6M3 8.5H0.5V6" fill="none" stroke="#d0d0d0" stroke-width=".9"/><path d="M2 2l1.5 1.5M7 2L5.5 3.5M7 7L5.5 5.5M2 7l1.5-1.5" stroke="#d0d0d0" stroke-width=".9"/></svg>
<div class="t" style="left:1019px;top:71.95px;width:80px;text-align:center;font-size:6.5px;line-height:9.5px;color:#c8c8c8;letter-spacing:-0.05px;-webkit-text-stroke:0.15px #c8c8c8">Min Size</div>
<div class="t" style="left:1082px;top:71.95px;font-size:6.3px;line-height:9.3px;color:#c8c8c8;letter-spacing:-0.2px;-webkit-text-stroke:0.15px #c8c8c8;">W</div>
<div class="a" style="left:1090px;top:71.75px;width:26px;height:8.5px;background:#434343"></div>
<div class="t" style="left:1092px;top:71.7px;font-size:6.5px;line-height:9.5px;color:#c8c8c8;letter-spacing:-0.05px;-webkit-text-stroke:0.15px #c8c8c8;">0</div>
<div class="t" style="left:1123px;top:71.95px;font-size:6.3px;line-height:9.3px;color:#c8c8c8;letter-spacing:-0.05px;-webkit-text-stroke:0.15px #c8c8c8;">H</div>
<div class="a" style="left:1130px;top:71.75px;width:25.5px;height:8.5px;background:#434343"></div>
<div class="t" style="left:1132px;top:71.7px;font-size:6.5px;line-height:9.5px;color:#c8c8c8;letter-spacing:-0.05px;-webkit-text-stroke:0.15px #c8c8c8;">0</div>
<div class="t" style="left:1019px;top:83.7px;width:80px;text-align:center;font-size:6.5px;line-height:9.5px;color:#c8c8c8;letter-spacing:-0.05px;-webkit-text-stroke:0.15px #c8c8c8">Max Size</div>
<div class="t" style="left:1082px;top:83.7px;font-size:6.3px;line-height:9.3px;color:#c8c8c8;letter-spacing:-0.2px;-webkit-text-stroke:0.15px #c8c8c8;">W</div>
<div class="a" style="left:1090px;top:83.5px;width:26px;height:8.5px;background:#434343"></div>
<div class="t" style="left:1092px;top:83.45px;font-size:6.5px;line-height:9.5px;color:#c8c8c8;letter-spacing:-0.05px;-webkit-text-stroke:0.15px #c8c8c8;">0</div>
<div class="t" style="left:1123px;top:83.7px;font-size:6.3px;line-height:9.3px;color:#c8c8c8;letter-spacing:-0.05px;-webkit-text-stroke:0.15px #c8c8c8;">H</div>
<div class="a" style="left:1130px;top:83.5px;width:25.5px;height:8.5px;background:#434343"></div>
<div class="t" style="left:1132px;top:83.45px;font-size:6.5px;line-height:9.5px;color:#c8c8c8;letter-spacing:-0.05px;-webkit-text-stroke:0.15px #c8c8c8;">0</div>
<div class="t" style="left:1019px;top:95.95px;width:80px;text-align:center;font-size:6.5px;line-height:9.5px;color:#c8c8c8;letter-spacing:-0.05px;-webkit-text-stroke:0.15px #c8c8c8">Pivot</div>
<div class="t" style="left:1082px;top:95.95px;font-size:6.3px;line-height:9.3px;color:#c8c8c8;letter-spacing:-0.2px;-webkit-text-stroke:0.15px #c8c8c8;">X</div>
<div class="a" style="left:1090px;top:95.75px;width:26px;height:8.5px;background:#434343"></div>
<div class="t" style="left:1092px;top:95.7px;font-size:6.5px;line-height:9.5px;color:#c8c8c8;letter-spacing:-0.05px;-webkit-text-stroke:0.15px #c8c8c8;">0</div>
<div class="t" style="left:1123px;top:95.95px;font-size:6.3px;line-height:9.3px;color:#c8c8c8;letter-spacing:-0.05px;-webkit-text-stroke:0.15px #c8c8c8;">Y</div>
<div class="a" style="left:1130px;top:95.75px;width:25.5px;height:8.5px;background:#434343"></div>
<div class="t" style="left:1132px;top:95.7px;font-size:6.5px;line-height:9.5px;color:#c8c8c8;letter-spacing:-0.05px;-webkit-text-stroke:0.15px #c8c8c8;">0</div>
<svg class="a" style="left:1162.5px;top:98.5px;" width="6" height="4" viewBox="0 0 6 4"><path d="M0 0h5.5l-2.75 3z" fill="#e8e8e8"/></svg>
<div class="a" style="left:1084.7px;top:108.8px;width:6.2px;height:6.4px;background:#484848;border-radius:.5px"></div>
<div class="t" style="left:1092.5px;top:107.7px;font-size:6.5px;line-height:9.5px;color:#c8c8c8;letter-spacing:-0.05px;-webkit-text-stroke:0.15px #c8c8c8;">Anchor</div>
<div class="t" style="left:1019px;top:118.45px;width:80px;text-align:center;font-size:6.5px;line-height:9.5px;color:#c8c8c8;letter-spacing:-0.05px;-webkit-text-stroke:0.15px #c8c8c8">Init Name</div>
<div class="a" style="left:1082px;top:118.75px;width:73.5px;height:8px;background:#434343"></div>
<svg class="a" style="left:1161px;top:118.75px;" width="8" height="8" viewBox="0 0 8 8"><circle cx="4" cy="4" r="3.5" fill="none" stroke="#cfcfcf" stroke-width=".8"/><path d="M4 3.2v2.8M4 1.8v.6M3.2 6h1.6" stroke="#cfcfcf" stroke-width=".8"/></svg>
<div class="t" style="left:1019px;top:131.29999999999998px;width:80px;text-align:center;font-size:6.5px;line-height:9.5px;color:#c8c8c8;letter-spacing:-0.05px;-webkit-text-stroke:0.15px #c8c8c8">Overflow</div>
<div class="a" style="left:1081px;top:131px;width:76px;height:9.6px;background:#464646;border:1px solid #4d4d4d"></div>
<div class="t" style="left:1082.5px;top:131.5px;font-size:6.5px;line-height:9.5px;color:#c8c8c8;letter-spacing:-0.05px;-webkit-text-stroke:0.15px #c8c8c8;">Visible</div>
<svg class="a" style="left:1148.5px;top:133.8px;" width="6" height="4" viewBox="0 0 6 4"><path d="M0 0h5.5l-2.75 3z" fill="#e8e8e8"/></svg>
<div class="t" style="left:1019px;top:144.45px;width:80px;text-align:center;font-size:6.5px;line-height:9.5px;color:#c8c8c8;letter-spacing:-0.05px;-webkit-text-stroke:0.15px #c8c8c8">Margin</div>
<div class="a" style="left:1082px;top:144.75px;width:73.5px;height:8px;background:#434343"></div>
<div class="t" style="left:1082px;top:144.45px;font-size:6.5px;line-height:9.5px;color:#c8c8c8;letter-spacing:-0.05px;-webkit-text-stroke:0.15px #c8c8c8;">0,0,0,0</div>
<div class="t" style="left:1019px;top:157.7px;width:80px;text-align:center;font-size:6.5px;line-height:9.5px;color:#c8c8c8;letter-spacing:-0.05px;-webkit-text-stroke:0.15px #c8c8c8">Custom Mask</div>
<div class="a" style="left:1082px;top:158px;width:73.5px;height:8px;background:#434343"></div>
<div class="t" style="left:1083.5px;top:157.7px;font-size:6.5px;line-height:9.5px;color:#8a8a8a;letter-spacing:-0.05px;-webkit-text-stroke:0.15px #8a8a8a;">Click to Set</div>
<svg class="a" style="left:1161px;top:158px;" width="8" height="8" viewBox="0 0 8 8"><circle cx="4" cy="4" r="3.5" fill="none" stroke="#cfcfcf" stroke-width=".8"/><path d="M4 3.2v2.8M4 1.8v.6M3.2 6h1.6" stroke="#cfcfcf" stroke-width=".8"/></svg>
<div class="a" style="left:1081.7px;top:171.8px;width:6.2px;height:6.4px;background:#484848;border-radius:.5px"></div>
<div class="t" style="left:1090px;top:170.7px;font-size:6.5px;line-height:9.5px;color:#c8c8c8;letter-spacing:-0.05px;-webkit-text-stroke:0.15px #c8c8c8;">Reversed Mask</div>
<div class="t" style="left:1019px;top:184.2px;width:80px;text-align:center;font-size:6.5px;line-height:9.5px;color:#c8c8c8;letter-spacing:-0.05px;-webkit-text-stroke:0.15px #c8c8c8">Hit Test</div>
<div class="a" style="left:1082px;top:184.5px;width:73.5px;height:8px;background:#434343"></div>
<div class="t" style="left:1083.5px;top:184.2px;font-size:6.5px;line-height:9.5px;color:#8a8a8a;letter-spacing:-0.05px;-webkit-text-stroke:0.15px #8a8a8a;">Click to Set</div>
<svg class="a" style="left:1161px;top:184.5px;" width="8" height="8" viewBox="0 0 8 8"><circle cx="4" cy="4" r="3.5" fill="none" stroke="#cfcfcf" stroke-width=".8"/><path d="M4 3.2v2.8M4 1.8v.6M3.2 6h1.6" stroke="#cfcfcf" stroke-width=".8"/></svg>
<div class="t" style="left:1019px;top:196.95px;width:80px;text-align:center;font-size:6.5px;line-height:9.5px;color:#c8c8c8;letter-spacing:-0.05px;-webkit-text-stroke:0.15px #c8c8c8">Click Through</div>
<div class="a" style="left:1083.7px;top:198.05px;width:6.2px;height:6.4px;background:#484848;border-radius:.5px"></div>
<div class="t" style="left:1092px;top:196.95px;font-size:6.5px;line-height:9.5px;color:#c8c8c8;letter-spacing:-0.12px;-webkit-text-stroke:0.15px #c8c8c8;">Click through blank area</div>
<svg class="a" style="left:1161px;top:197.25px;" width="8" height="8" viewBox="0 0 8 8"><circle cx="4" cy="4" r="3.5" fill="none" stroke="#cfcfcf" stroke-width=".8"/><path d="M4 3.2v2.8M4 1.8v.6M3.2 6h1.6" stroke="#cfcfcf" stroke-width=".8"/></svg>
<div class="t" style="left:1019px;top:210.1px;width:80px;text-align:center;font-size:6.5px;line-height:9.5px;color:#c8c8c8;letter-spacing:-0.05px;-webkit-text-stroke:0.15px #c8c8c8">Extension</div>
<div class="a" style="left:1081px;top:209.4px;width:76px;height:9.4px;background:#464646;border:1px solid #4d4d4d"></div>
<div class="t" style="left:1082.5px;top:209.79999999999998px;font-size:6.5px;line-height:9.5px;color:#c8c8c8;letter-spacing:-0.05px;-webkit-text-stroke:0.15px #c8c8c8;">(None)</div>
<svg class="a" style="left:1148.5px;top:212.5px;" width="6" height="4" viewBox="0 0 6 4"><path d="M0 0h5.5l-2.75 3z" fill="#e8e8e8"/></svg>
<div class="t" style="left:1019px;top:223.45px;width:80px;text-align:center;font-size:6.5px;line-height:9.5px;color:#c8c8c8;letter-spacing:-0.05px;-webkit-text-stroke:0.15px #c8c8c8">Bg.Color</div>
<div class="a" style="left:1081.7px;top:224.55px;width:6.2px;height:6.4px;background:#484848;border-radius:.5px"></div>
<div class="a" style="left:1091px;top:224.4px;width:14.6px;height:7.9px;background:#ffffff;border:1px solid #222;border-radius:1px"></div>
<svg class="a" style="left:1109.5px;top:226.5px;" width="6" height="4" viewBox="0 0 6 4"><path d="M0 0h5.5l-2.75 3z" fill="#e8e8e8"/></svg>
<svg class="a" style="left:1161px;top:223.75px;" width="8" height="8" viewBox="0 0 8 8"><circle cx="4" cy="4" r="3.5" fill="none" stroke="#cfcfcf" stroke-width=".8"/><path d="M4 3.2v2.8M4 1.8v.6M3.2 6h1.6" stroke="#cfcfcf" stroke-width=".8"/></svg>
<svg class="a" style="left:1040.5px;top:241.0px;" width="6" height="4" viewBox="0 0 6 4"><path d="M0 0h5.5l-2.75 3z" fill="#e8e8e8"/></svg>
<div class="t" style="left:1049.5px;top:237.79999999999998px;font-size:6.5px;line-height:9.5px;color:#c8c8c8;letter-spacing:-0.05px;-webkit-text-stroke:0.15px #c8c8c8;">Relations</div>
<div class="a" style="left:1080px;top:241.7px;width:195px;height:1px;background:#444"></div>
<svg class="a" style="left:1043px;top:251.5px;" width="7" height="7" viewBox="0 0 7 7"><path d="M3.5 0v7M0 3.5h7" stroke="#d8d8d8" stroke-width="1"/></svg>
<div class="t" style="left:1051.5px;top:251.29999999999998px;font-size:6.5px;line-height:9.5px;color:#c8c8c8;letter-spacing:-0.05px;-webkit-text-stroke:0.15px #c8c8c8;">Add</div>
<svg class="a" style="left:1090px;top:251px;" width="7" height="8" viewBox="0 0 7 8"><path d="M1.5 7.5v-5h2V.5h2v7z" fill="none" stroke="#9a9a9a" stroke-width=".8"/></svg>
<div class="t" style="left:1098.5px;top:251.29999999999998px;font-size:6.5px;line-height:9.5px;color:#8a8a8a;letter-spacing:-0.05px;-webkit-text-stroke:0.15px #8a8a8a;">Copy</div>
<svg class="a" style="left:1119.5px;top:251px;" width="8" height="8" viewBox="0 0 8 8"><rect x="0.5" y="1.5" width="5" height="6" fill="none" stroke="#9a9a9a" stroke-width=".8"/><rect x="3" y="3.5" width="4.5" height="4.5" rx="1.5" fill="none" stroke="#9a9a9a" stroke-width=".8"/></svg>
<div class="t" style="left:1128.5px;top:251.29999999999998px;font-size:6.5px;line-height:9.5px;color:#8a8a8a;letter-spacing:-0.05px;-webkit-text-stroke:0.15px #8a8a8a;">Paste</div>
<svg class="a" style="left:1040.5px;top:266.25px;" width="6" height="4" viewBox="0 0 6 4"><path d="M0 0h5.5l-2.75 3z" fill="#e8e8e8"/></svg>
<div class="t" style="left:1049.5px;top:263.05px;font-size:6.5px;line-height:9.5px;color:#c8c8c8;letter-spacing:-0.05px;-webkit-text-stroke:0.15px #c8c8c8;">Etc</div>
<div class="a" style="left:1063px;top:266.95px;width:212px;height:1px;background:#444"></div>
<div class="t" style="left:1040.5px;top:278.7px;font-size:6.5px;line-height:9.5px;color:#c8c8c8;letter-spacing:-0.05px;-webkit-text-stroke:0.15px #c8c8c8;">Custom Props.</div>
<div class="a" style="left:1087px;top:278px;width:40.5px;height:10.75px;background:#464646;border-radius:1.5px"></div>
<div class="t" style="left:1087px;top:278.4px;width:40.5px;text-align:center;font-size:6.5px;line-height:9.5px;color:#d8d8d8;letter-spacing:-0.05px;-webkit-text-stroke:0.15px #d8d8d8">Edit...</div>
<div class="t" style="left:1041px;top:294.45px;font-size:6.5px;line-height:9.5px;color:#c8c8c8;letter-spacing:-0.05px;-webkit-text-stroke:0.15px #c8c8c8;">Custom Data</div>
<div class="a" style="left:1082px;top:294.4px;width:86.75px;height:38.6px;background:#424242"></div>
<svg class="a" style="left:1160px;top:325px;" width="7" height="7" viewBox="0 0 7 7"><path d="M4 0.5H0.5v6h6V3" fill="none" stroke="#d0d0d0" stroke-width=".8"/><path d="M2.5 4.5l4-4" stroke="#d0d0d0" stroke-width=".9"/></svg>
<div class="t" style="left:1042px;top:338.7px;font-size:6.5px;line-height:9.5px;color:#c8c8c8;letter-spacing:-0.05px;-webkit-text-stroke:0.15px #c8c8c8;">Enter Sound</div>
<div class="a" style="left:1081px;top:338.75px;width:87.75px;height:8.1px;background:#434343"></div>
<div class="t" style="left:1082px;top:338.5px;font-size:6.5px;line-height:9.5px;color:#8a8a8a;letter-spacing:-0.05px;-webkit-text-stroke:0.15px #8a8a8a;">Drag from Library</div>
<div class="t" style="left:1043.5px;top:351.95px;font-size:6.5px;line-height:9.5px;color:#c8c8c8;letter-spacing:-0.05px;-webkit-text-stroke:0.15px #c8c8c8;">Exit Sound</div>
<div class="a" style="left:1081px;top:351.25px;width:87.75px;height:8.1px;background:#434343"></div>
<div class="t" style="left:1082px;top:351.0px;font-size:6.5px;line-height:9.5px;color:#8a8a8a;letter-spacing:-0.05px;-webkit-text-stroke:0.15px #8a8a8a;">Drag from Library</div>
<svg class="a" style="left:1040.5px;top:369.5px;" width="6" height="4" viewBox="0 0 6 4"><path d="M0 0h5.5l-2.75 3z" fill="#e8e8e8"/></svg>
<div class="t" style="left:1049.5px;top:366.3px;font-size:6.5px;line-height:9.5px;color:#c8c8c8;letter-spacing:-0.05px;-webkit-text-stroke:0.15px #c8c8c8;">Design Image</div>
<div class="a" style="left:1092.5px;top:370.2px;width:182.5px;height:1px;background:#444"></div>
<div class="t" style="left:1019px;top:382.59999999999997px;width:80px;text-align:center;font-size:6.5px;line-height:9.5px;color:#c8c8c8;letter-spacing:-0.05px;-webkit-text-stroke:0.15px #c8c8c8">Resource</div>
<div class="a" style="left:1082px;top:382px;width:73.5px;height:8px;background:#434343"></div>
<div class="t" style="left:1082.5px;top:381.7px;font-size:6.5px;line-height:9.5px;color:#8a8a8a;letter-spacing:-0.05px;-webkit-text-stroke:0.15px #8a8a8a;">Drag from Library</div>
<svg class="a" style="left:1161px;top:385.0px;" width="6" height="4" viewBox="0 0 6 4"><path d="M0 0h5.5l-2.75 3z" fill="#e8e8e8"/></svg>
<div class="t" style="left:1019px;top:395.3px;width:80px;text-align:center;font-size:6.5px;line-height:9.5px;color:#c8c8c8;letter-spacing:-0.05px;-webkit-text-stroke:0.15px #c8c8c8">Offset</div>
<div class="t" style="left:1083px;top:395.3px;font-size:6.5px;line-height:9.5px;color:#c8c8c8;letter-spacing:-0.05px;-webkit-text-stroke:0.15px #c8c8c8;">X</div>
<div class="a" style="left:1090px;top:395.5px;width:23.5px;height:8.2px;background:#434343"></div>
<div class="t" style="left:1092px;top:395.3px;font-size:6.5px;line-height:9.5px;color:#c8c8c8;letter-spacing:-0.05px;-webkit-text-stroke:0.15px #c8c8c8;">0</div>
<div class="t" style="left:1126px;top:395.3px;font-size:6.5px;line-height:9.5px;color:#c8c8c8;letter-spacing:-0.05px;-webkit-text-stroke:0.15px #c8c8c8;">Y</div>
<div class="a" style="left:1132px;top:395.5px;width:23.5px;height:8.2px;background:#434343"></div>
<div class="t" style="left:1134px;top:395.3px;font-size:6.5px;line-height:9.5px;color:#c8c8c8;letter-spacing:-0.05px;-webkit-text-stroke:0.15px #c8c8c8;">0</div>
<div class="t" style="left:1019px;top:408.2px;width:80px;text-align:center;font-size:6.5px;line-height:9.5px;color:#c8c8c8;letter-spacing:-0.05px;-webkit-text-stroke:0.15px #c8c8c8">Alpha</div>
<div class="a" style="left:1081px;top:408.5px;width:17.75px;height:8.2px;background:#434343"></div>
<div class="t" style="left:1081.5px;top:408.3px;font-size:6.5px;line-height:9.5px;color:#c8c8c8;letter-spacing:-0.05px;-webkit-text-stroke:0.15px #c8c8c8;">50</div>
<div class="t" style="left:1019px;top:421.59999999999997px;width:80px;text-align:center;font-size:6.5px;line-height:9.5px;color:#c8c8c8;letter-spacing:-0.05px;-webkit-text-stroke:0.15px #c8c8c8">Layer</div>
<svg class="a" style="left:1083.5px;top:422.4px;" width="7" height="7" viewBox="0 0 7 7"><circle cx="3.5" cy="3.5" r="3" fill="#343434" stroke="#2e2e2e" stroke-width=".6"/><circle cx="3.5" cy="3.5" r="1" fill="#e8e8e8"/></svg>
<div class="t" style="left:1092.5px;top:421.59999999999997px;font-size:6.5px;line-height:9.5px;color:#c8c8c8;letter-spacing:-0.05px;-webkit-text-stroke:0.15px #c8c8c8;">Bottom</div>
<svg class="a" style="left:1122.5px;top:422.4px;" width="7" height="7" viewBox="0 0 7 7"><circle cx="3.5" cy="3.5" r="3" fill="#343434" stroke="#2e2e2e" stroke-width=".6"/></svg>
<div class="t" style="left:1132px;top:421.59999999999997px;font-size:6.5px;line-height:9.5px;color:#c8c8c8;letter-spacing:-0.05px;-webkit-text-stroke:0.15px #c8c8c8;">Top</div>
<div class="a" style="left:1083.45px;top:435.3px;width:6.2px;height:6.4px;background:#484848;border-radius:.5px"></div>
<div class="t" style="left:1091.5px;top:434.2px;font-size:6.5px;line-height:9.5px;color:#c8c8c8;letter-spacing:-0.05px;-webkit-text-stroke:0.15px #c8c8c8;">Show in Test View</div>
</body></html>
